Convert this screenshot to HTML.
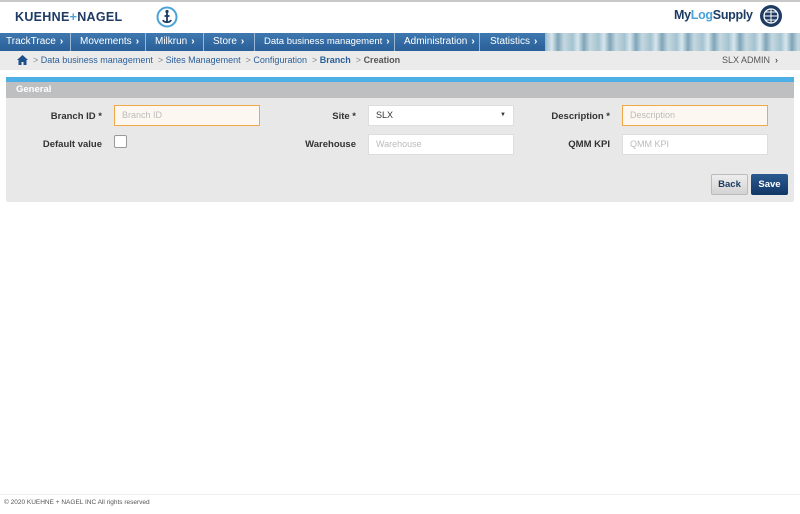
<!DOCTYPE html>
<html><head><style>
*{box-sizing:border-box;margin:0;padding:0}
body{width:800px;height:514px;position:relative;background:#fff;font-family:"Liberation Sans",Arial,sans-serif;overflow:hidden}
.a{position:absolute}
.nav{top:33px;height:18px;background:linear-gradient(#3f78b0,#2a5f98);color:#fff;font-size:10px;line-height:18px;padding-left:6px;border-right:1px solid #9bb7d4;white-space:nowrap;overflow:hidden}
.nav b{font-weight:bold;margin-left:4px;font-size:10px}
.lbl{font-size:9.5px;font-weight:bold;color:#333;text-align:right}
.in{height:21px;background:#fff;border:1px solid #ddd;font-size:9px;color:#bbb;line-height:19px;padding-left:7px}
.req{background:#fdf7f1;border:1px solid #f0a848}
</style></head><body>
<div class="a" style="top:0;left:0;width:800px;height:2px;background:#c8c8c8"></div>
<div class="a" style="top:10px;left:15px;font-size:12.5px;font-weight:bold;color:#1d3b63;letter-spacing:0.3px">KUEHNE<span style="color:#4aa3d8">+</span>NAGEL</div>
<svg class="a" style="top:6px;left:156px" width="22" height="22" viewBox="0 0 22 22"><circle cx="11" cy="11" r="9.5" fill="none" stroke="#4aa3d8" stroke-width="2"/><circle cx="11" cy="5.5" r="1.6" fill="#1d3b63"/><path d="M11 7v10M7 14c1 3 7 3 8 0M8.5 10h5" stroke="#1d3b63" stroke-width="1.8" fill="none"/></svg>
<div class="a" style="top:8px;left:674px;font-size:12.5px;font-weight:bold;color:#1d3b63;letter-spacing:-0.3px">My<span style="color:#4aa3d8">Log</span>Supply</div>
<svg class="a" style="top:4px;left:759px" width="24" height="24" viewBox="0 0 24 24"><circle cx="12" cy="12" r="11" fill="#1d3b63"/><circle cx="12" cy="12" r="7" fill="none" stroke="#fff" stroke-width="1.3"/><path d="M5 12h14M12 5v14M7 8h10M7 16h10" stroke="#fff" stroke-width="1"/></svg>
<div class="a nav" style="left:0;width:71px">TrackTrace<b>›</b></div>
<div class="a nav" style="left:71px;width:75px;padding-left:9px">Movements<b>›</b></div>
<div class="a nav" style="left:146px;width:58px;padding-left:9px">Milkrun<b>›</b></div>
<div class="a nav" style="left:204px;width:51px;padding-left:9px">Store<b>›</b></div>
<div class="a nav" style="left:255px;width:140px;padding-left:9px;font-size:9.5px">Data business management<b>›</b></div>
<div class="a nav" style="left:395px;width:85px;padding-left:9px">Administration<b>›</b></div>
<div class="a nav" style="left:480px;width:66px;padding-left:10px">Statistics<b>›</b></div>
<div class="a" style="top:33px;left:546px;width:254px;height:18px;background:repeating-linear-gradient(90deg,#9fc0cf 0,#d8e6ec 6px,#7fa5b8 12px,#c4d8e0 18px,#a8c4d0 26px)"></div>
<div class="a" style="top:51px;left:0;width:800px;height:19px;background:#ebebeb;font-size:9px;line-height:19px;color:#2a5f98;white-space:nowrap">
<svg style="position:absolute;left:17px;top:4px" width="11" height="10" viewBox="0 0 11 10"><path d="M5.5 0L0 5h1.5v5h3V7h2v3h3V5H11z" fill="#1d4f8a"/></svg>
<span style="position:absolute;left:33px"><span style="color:#888">&gt;</span> Data business management &nbsp;<span style="color:#888">&gt;</span> Sites Management &nbsp;<span style="color:#888">&gt;</span> Configuration &nbsp;<span style="color:#888">&gt;</span> <b>Branch</b> &nbsp;<span style="color:#888">&gt;</span> <b style="color:#555">Creation</b></span>
<span style="position:absolute;left:722px;color:#555">SLX ADMIN &nbsp;<b>›</b></span></div>
<div class="a" style="top:77px;left:6px;width:788px;height:125px;background:#e8e8e8;border-radius:2px"></div>
<div class="a" style="top:77px;left:6px;width:788px;height:5px;background:#4cb0e6"></div>
<div class="a" style="top:82px;left:6px;width:788px;height:16px;background:#bdbfc1;color:#fff;font-size:9.5px;font-weight:bold;line-height:16px;padding-left:10px">General</div>
<div class="a lbl" style="top:111px;left:20px;width:82px">Branch ID *</div>
<div class="a in req" style="top:105px;left:114px;width:146px">Branch ID</div>
<div class="a lbl" style="top:139px;left:20px;width:82px">Default value</div>
<div class="a" style="top:135px;left:114px;width:13px;height:13px;background:#fff;border:1px solid #999;border-radius:2px"></div>
<div class="a lbl" style="top:111px;left:280px;width:76px">Site *</div>
<div class="a in" style="top:105px;left:368px;width:146px;color:#333">SLX<span style="position:absolute;right:7px;top:0;font-size:6px">▼</span></div>
<div class="a lbl" style="top:139px;left:280px;width:76px">Warehouse</div>
<div class="a in" style="top:134px;left:368px;width:146px">Warehouse</div>
<div class="a lbl" style="top:111px;left:530px;width:80px">Description *</div>
<div class="a in req" style="top:105px;left:622px;width:146px">Description</div>
<div class="a lbl" style="top:139px;left:530px;width:80px">QMM KPI</div>
<div class="a in" style="top:134px;left:622px;width:146px">QMM KPI</div>
<div class="a" style="top:174px;left:711px;width:37px;height:21px;background:linear-gradient(#eee,#d3d3d3);border:1px solid #bbb;border-radius:2px;font-size:9.5px;font-weight:bold;color:#1d3b63;text-align:center;line-height:19px">Back</div>
<div class="a" style="top:174px;left:751px;width:37px;height:21px;background:linear-gradient(#2a5a90,#133766);border-radius:2px;font-size:9.5px;font-weight:bold;color:#fff;text-align:center;line-height:21px">Save</div>
<div class="a" style="top:494px;left:0;width:800px;height:1px;background:#eee"></div>
<div class="a" style="top:499px;left:4px;font-size:6.5px;color:#555">© 2020 KUEHNE + NAGEL INC All rights reserved</div>
</body></html>
